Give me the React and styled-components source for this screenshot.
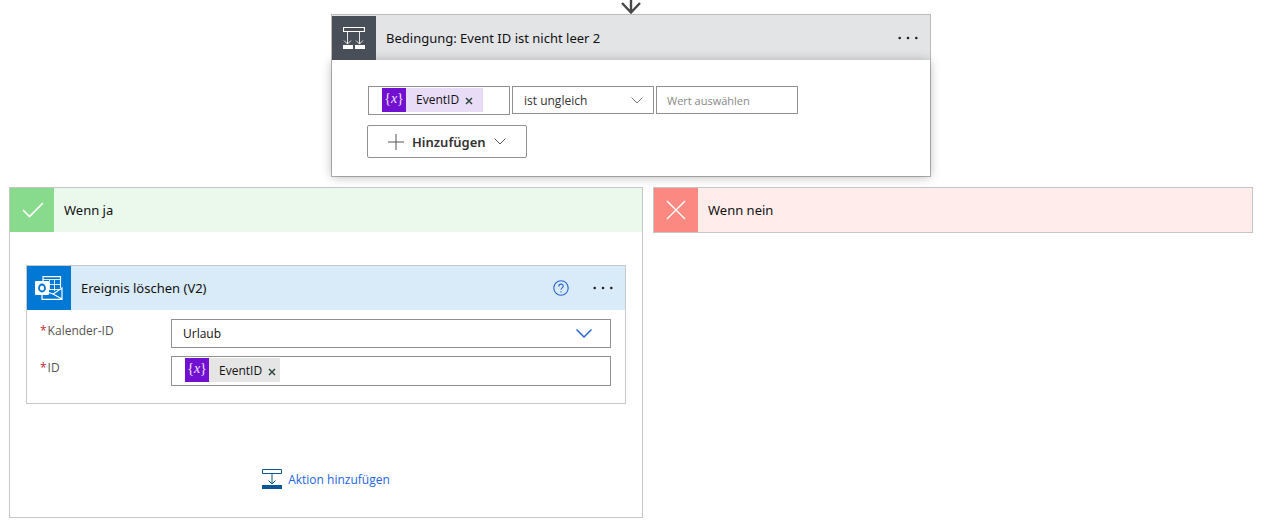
import React from "react";
import styled, { createGlobalStyle } from "styled-components";

function App() {
  return (
    <Page>
      <GlobalStyle />

      <Connector viewBox="0 0 20 14" aria-hidden="true">
        <path d="M10 0V12M1 3L10 12.5L19 3" />
      </Connector>

      <ConditionCard>
        <ConditionHeader>
          <IconTile $color="#484f58">
            <ConditionIcon />
          </IconTile>
          <Title>Bedingung: Event ID ist nicht leer 2</Title>
          <MenuButton />
        </ConditionHeader>

        <ConditionBody>
          <Expression>
            <TokenField $height={29}>
              <Token $color="#e9dcf7" $end={8} />
              <TokenInput aria-label="Linker Wert" />
            </TokenField>
            <SelectWrap $height={28} $color="#333333" $end={10}>
              <select aria-label="Operator" defaultValue="ist ungleich">
                <option>ist ungleich</option>
              </select>
              <Chevron width={12} height={7} stroke="#777777" />
            </SelectWrap>
            <ValueInput aria-label="Wert" placeholder="Wert auswählen" />
          </Expression>

          <AddButton type="button">
            <svg width="16" height="16" viewBox="0 0 16 16" aria-hidden="true">
              <path d="M8 0V16M0 8H16" fill="none" stroke="#555555" />
            </svg>
            Hinzufügen
            <Chevron width={12} height={7} stroke="#555555" />
          </AddButton>
        </ConditionBody>
      </ConditionCard>

      <Branches>
        <Branch $basis={634}>
          <Header $color="#ebf9ed">
            <IconTile $color="#88da8d">
              <svg width="24" height="18" viewBox="0 0 24 18" aria-hidden="true">
                <path d="M3 9L9.5 15.5L23 2" fill="none" stroke="white" strokeWidth="1.6" />
              </svg>
            </IconTile>
            <Title>Wenn ja</Title>
          </Header>

          <BranchBody>
            <ActionCard>
              <Header $color="#d9eaf8">
                <IconTile $color="#0078d4">
                  <OutlookIcon />
                </IconTile>
                <Title>Ereignis löschen (V2)</Title>
                <HelpButton type="button" aria-label="Hilfe">
                  <svg width="16" height="16" viewBox="0 0 16 16" aria-hidden="true">
                    <circle cx="8" cy="8" r="7.2" />
                    <path d="M5.8 6.4C5.8 3.4 10.3 3.5 10.3 6.1C10.3 7.8 8 7.9 8 9.8M8 11.2V12.4" />
                  </svg>
                </HelpButton>
                <MenuButton />
              </Header>

              <Form>
                <Label htmlFor="calendar">
                  <span>*</span>Kalender-ID
                </Label>
                <SelectWrap $height={29} $color="#111111" $end={18}>
                  <select id="calendar" defaultValue="Urlaub">
                    <option>Urlaub</option>
                  </select>
                  <Chevron width={16} height={9} stroke="#2c64d0" />
                </SelectWrap>
                <Label htmlFor="event">
                  <span>*</span>ID
                </Label>
                <TokenField $height={30}>
                  <Token $color="#e5e5e5" $end={2} />
                  <TokenInput id="event" />
                </TokenField>
              </Form>
            </ActionCard>

            <AddAction href="#add">
              <svg width="20" height="20" viewBox="0 0 20 20" aria-hidden="true">
                <path d="M0.5 0.5H19.5V4.5H0.5ZM10 5V15M6.5 11.5L10 15L13.5 11.5" />
                <rect y="16" width="20" height="4" />
              </svg>
              Aktion hinzufügen
            </AddAction>
          </BranchBody>
        </Branch>

        <Branch $basis={600}>
          <Header $color="#ffeceb">
            <IconTile $color="#fc8882">
              <svg width="20" height="20" viewBox="0 0 20 20" aria-hidden="true">
                <path d="M1 1L19 19M19 1L1 19" fill="none" stroke="white" strokeWidth="1.4" />
              </svg>
            </IconTile>
            <Title>Wenn nein</Title>
          </Header>
        </Branch>
      </Branches>
    </Page>
  );
}

function Token({ $color, $end }) {
  return (
    <TokenBox $color={$color} $end={$end}>
      <TokenIcon>
        {"{"}
        <i>x</i>
        {"}"}
      </TokenIcon>
      <span>EventID</span>
      <RemoveButton type="button" aria-label="Entfernen">
        <svg width="8" height="8" viewBox="0 0 8 8" aria-hidden="true">
          <path d="M1 1L7 7M7 1L1 7" fill="none" stroke="#2f4a3c" strokeWidth="1.5" />
        </svg>
      </RemoveButton>
    </TokenBox>
  );
}

function MenuButton() {
  return (
    <DotsButton type="button" aria-label="Menü">
      <svg width="20" height="4" viewBox="0 0 20 4" aria-hidden="true">
        <circle cx="1.7" cy="2" r="1.3" />
        <circle cx="10" cy="2" r="1.3" />
        <circle cx="18.3" cy="2" r="1.3" />
      </svg>
    </DotsButton>
  );
}

function Chevron({ width, height, stroke }) {
  return (
    <svg width={width} height={height} viewBox={`0 0 ${width} ${height}`} aria-hidden="true">
      <path
        d={`M0.5 0.5L${width / 2} ${height - 1}L${width - 0.5} 0.5`}
        fill="none"
        stroke={stroke}
        strokeWidth={width > 12 ? 1.5 : 1}
      />
    </svg>
  );
}

function ConditionIcon() {
  return (
    <svg width="22" height="22" viewBox="0 0 22 22" fill="none" stroke="white" aria-hidden="true">
      <path d="M0.5 0.5H21.5V4.5H0.5Z" strokeWidth="1.2" />
      <path d="M4.5 5V17M1 13.5L4.5 17L8 13.5M16.5 5V17M13 13.5L16.5 17L20 13.5" strokeOpacity="0.85" />
      <path d="M0 18H10V22H0ZM12 18H22V22H12Z" fill="white" stroke="none" />
    </svg>
  );
}

function OutlookIcon() {
  return (
    <svg width="28" height="24" viewBox="0 0 28 24" fill="none" stroke="white" aria-hidden="true">
      <path d="M8 5V0.6H25.5V12" strokeWidth="1.2" />
      <path d="M8 3.5H25M14.5 4V14M19.5 4V15M14 8.5H25M14 13.5H24" strokeOpacity="0.85" />
      <path d="M7 19V23.4H27V12L18 18L14 16.5M18 18L27 23" strokeWidth="1.2" />
      <rect y="5" width="14" height="14" rx="1" fill="white" stroke="none" />
      <ellipse cx="7" cy="12" rx="3" ry="3.5" stroke="#0078d4" strokeWidth="1.8" />
    </svg>
  );
}

const GlobalStyle = createGlobalStyle`
  * {
    box-sizing: border-box;
  }

  body {
    margin: 0;
    background-color: white;
    color: #111111;
    font-family: "Open Sans", "Noto Sans", sans-serif;
    font-size: 12px;
  }

  button,
  input,
  select {
    font: inherit;
    color: inherit;
  }

  button {
    padding: 0;
    border: none;
    background: none;
    cursor: pointer;
  }

  svg {
    display: block;
    flex: none;
  }
`;

const Page = styled.main`
  display: flex;
  flex-direction: column;
  align-items: center;
  padding: 0 11px 9px 9px;
`;

const Connector = styled.svg`
  width: 20px;
  height: 14px;
  fill: none;
  stroke: #484848;
  stroke-width: 2.4;
`;

const ConditionCard = styled.section`
  width: 100%;
  max-width: 600px;
  border: 1px solid #bbbbbb;
  background-color: #e3e4e6;
`;

const Header = styled.header`
  display: flex;
  align-items: center;
  height: 44px;
  padding-right: 12px;
  background-color: ${({ $color }) => $color};
`;

const ConditionHeader = styled(Header)`
  margin-top: 1px;
`;

const IconTile = styled.div`
  display: flex;
  align-items: center;
  justify-content: center;
  flex: none;
  width: 44px;
  height: 44px;
  background-color: ${({ $color }) => $color};
`;

const Title = styled.h2`
  flex: 1;
  margin: 0 0 0 10px;
  font-family: "Noto Sans", "Open Sans", sans-serif;
  font-size: 13px;
  font-weight: 400;
`;

const DotsButton = styled.button`
  display: flex;
  align-items: center;
  height: 24px;
  fill: #222222;
`;

const HelpButton = styled.button`
  margin-right: 24px;

  svg {
    fill: none;
    stroke: #2c64d0;
    stroke-width: 1.1;
  }
`;

const ConditionBody = styled.div`
  padding: 26px 35px 18px;
  background-color: white;
  box-shadow: 0 1px 10px rgba(0, 0, 0, 0.28);
`;

const Expression = styled.div`
  display: grid;
  grid-template-columns: repeat(3, minmax(0, 1fr));
  align-items: start;
  gap: 2px;
  max-width: 431px;
  padding-left: 1px;
`;

const TokenField = styled.div`
  display: flex;
  align-items: center;
  height: ${({ $height }) => $height}px;
  padding-left: 13px;
  border: 1px solid #919191;
  background-color: white;
`;

const TokenBox = styled.span`
  display: flex;
  align-items: center;
  height: 24px;
  margin-bottom: 2px;
  padding-right: ${({ $end }) => $end}px;
  background-color: ${({ $color }) => $color};
`;

const TokenIcon = styled.span`
  width: 24px;
  height: 24px;
  margin-right: 10px;
  background-color: #7110d0;
  color: #f0e2fb;
  font-family: "Liberation Serif", serif;
  font-size: 14px;
  line-height: 22px;
  text-align: center;
`;

const RemoveButton = styled.button`
  margin-left: 4px;
  padding: 3px 2px 0;
`;

const TokenInput = styled.input`
  flex: 1;
  min-width: 0;
  width: 0;
  border: none;
  outline: none;
  background: transparent;
`;

const SelectWrap = styled.div`
  display: grid;
  align-items: center;
  height: ${({ $height }) => $height}px;
  border: 1px solid #919191;
  color: ${({ $color }) => $color};

  select,
  svg {
    grid-area: 1 / 1;
  }

  select {
    width: 100%;
    height: 100%;
    padding: 0 32px 0 11px;
    border: none;
    background: transparent;
    appearance: none;
  }

  svg {
    justify-self: end;
    margin-right: ${({ $end }) => $end}px;
    pointer-events: none;
  }
`;

const ValueInput = styled.input`
  width: 100%;
  height: 28px;
  padding: 0 10px;
  border: 1px solid #919191;
  font-size: 11px;

  &::placeholder {
    color: #888888;
  }
`;

const AddButton = styled.button`
  display: flex;
  align-items: center;
  gap: 8px;
  height: 33px;
  margin-top: 10px;
  padding: 0 20px;
  border: 1px solid #919191;
  border-radius: 2px;
  color: #333333;
  font-family: "Noto Sans", "Open Sans", sans-serif;
  font-size: 13px;
  font-weight: 600;
`;

const Branches = styled.div`
  display: flex;
  align-items: flex-start;
  gap: 10px;
  width: 100%;
  margin-top: 10px;
`;

const Branch = styled.section`
  flex: ${({ $basis }) => `${$basis} 1 ${$basis}px`};
  min-width: 0;
  border: 1px solid #c4c6c4;
  background-color: white;
`;

const BranchBody = styled.div`
  display: flex;
  flex-direction: column;
  align-items: center;
  padding: 33px 16px 28px;
`;

const ActionCard = styled.article`
  width: 100%;
  border: 1px solid #c8c8c8;
`;

const Form = styled.div`
  display: grid;
  grid-template-columns: 131px 1fr;
  row-gap: 8px;
  padding: 9px 14px 17px 13px;
`;

const Label = styled.label`
  padding-top: 4px;
  color: #555555;
  line-height: 16px;

  span {
    margin-right: 1px;
    color: #c4262e;
  }
`;

const AddAction = styled.a`
  display: flex;
  align-items: center;
  gap: 6px;
  margin-top: 65px;
  color: #2266e3;
  text-decoration: none;

  svg {
    fill: none;
    stroke: #0b5599;
  }

  rect {
    fill: #0b5599;
    stroke: none;
  }
`;

export default App;
